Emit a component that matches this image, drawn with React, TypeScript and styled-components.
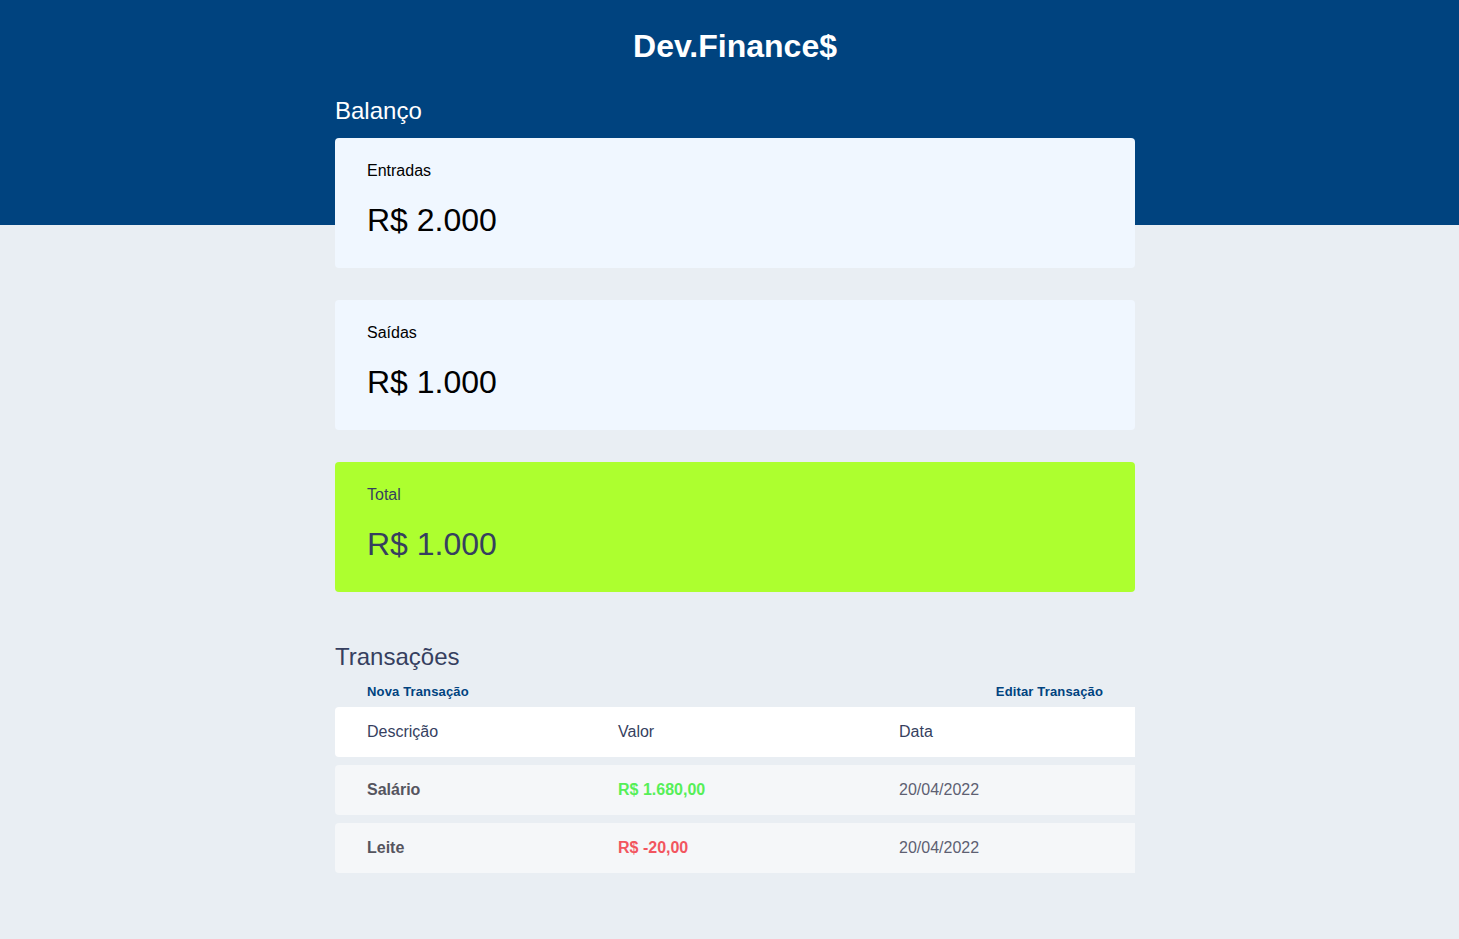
import React from "react";
import styled, { createGlobalStyle } from "styled-components";

const GlobalStyle = createGlobalStyle`
  * { box-sizing: border-box; margin: 0; padding: 0; }
  body {
    background: #e9eef3;
    font-family: "Liberation Sans", Arial, sans-serif;
    min-height: 100vh;
  }
`;

const Header = styled.header`
  background: #00437f;
  height: 225px;
  padding: 28px 0 0 11px;
  text-align: center;
`;

const Logo = styled.h1`
  color: #ffffff;
  font-size: 32px;
  line-height: 37px;
  font-weight: 700;
`;

const Page = styled.div`
  padding-left: 11px;
`;

const Main = styled.main`
  width: 800px;
  margin: -128px auto 0;
  display: flex;
  flex-direction: column;
`;

const SectionTitle = styled.h2<{ $light?: boolean }>`
  font-size: 24px;
  line-height: 28px;
  font-weight: 400;
  color: ${(p) => (p.$light ? "#ffffff" : "#363f5f")};
`;

const Balance = styled.section`
  display: flex;
  flex-direction: column;
  gap: 13px;
`;

const Cards = styled.div`
  display: flex;
  flex-direction: column;
  gap: 32px;
`;

const Card = styled.div<{ $total?: boolean }>`
  background: ${(p) => (p.$total ? "#adff2f" : "#f0f7ff")};
  color: ${(p) => (p.$total ? "#363f5f" : "#000000")};
  border-radius: 4px;
  padding: 24px 32px;
`;

const CardLabel = styled.h3`
  font-size: 16px;
  line-height: 18px;
  font-weight: 400;
`;

const CardValue = styled.p`
  font-size: 32px;
  line-height: 48px;
  margin-top: 16px;
`;

const Transactions = styled.section`
  margin-top: 51px;
  display: flex;
  flex-direction: column;
`;

const Actions = styled.div`
  display: flex;
  justify-content: space-between;
  padding: 0 32px;
  margin-top: 13px;
`;

const ActionLink = styled.a`
  color: #00437f;
  font-size: 13px;
  line-height: 15px;
  font-weight: 700;
  text-decoration: none;
  letter-spacing: 0.15px;
  cursor: pointer;
`;

const Table = styled.div`
  display: flex;
  flex-direction: column;
  gap: 8px;
  margin-top: 8px;
`;

const Row = styled.div<{ $head?: boolean }>`
  display: grid;
  grid-template-columns: 251px 281px 268px;
  height: 50px;
  align-items: center;
  background: ${(p) => (p.$head ? "#ffffff" : "#f5f7f9")};
  border-radius: 4px 0 0 4px;
`;

const Cell = styled.div<{ $kind?: "head" | "desc" | "income" | "expense" | "date" }>`
  padding-left: 32px;
  font-size: 16px;
  line-height: 18px;
  font-weight: ${(p) =>
    p.$kind === "desc" || p.$kind === "income" || p.$kind === "expense" ? 700 : 400};
  color: ${(p) =>
    p.$kind === "desc"
      ? "#55555f"
      : p.$kind === "income"
      ? "#56ef58"
      : p.$kind === "expense"
      ? "#f2555f"
      : p.$kind === "date"
      ? "#5d5f72"
      : "#363f5f"};
`;

const transactions = [
  { desc: "Salário", amount: "R$ 1.680,00", income: true, date: "20/04/2022" },
  { desc: "Leite", amount: "R$ -20,00", income: false, date: "20/04/2022" },
];

export default function App() {
  return (
    <>
      <GlobalStyle />
      <Header>
        <Logo>Dev.Finance$</Logo>
      </Header>
      <Page>
        <Main>
          <Balance>
            <SectionTitle $light>Balanço</SectionTitle>
            <Cards>
              <Card>
                <CardLabel>Entradas</CardLabel>
                <CardValue>R$ 2.000</CardValue>
              </Card>
              <Card>
                <CardLabel>Saídas</CardLabel>
                <CardValue>R$ 1.000</CardValue>
              </Card>
              <Card $total>
                <CardLabel>Total</CardLabel>
                <CardValue>R$ 1.000</CardValue>
              </Card>
            </Cards>
          </Balance>
          <Transactions>
            <SectionTitle>Transações</SectionTitle>
            <Actions>
              <ActionLink>Nova Transação</ActionLink>
              <ActionLink>Editar Transação</ActionLink>
            </Actions>
            <Table>
              <Row $head>
                <Cell>Descrição</Cell>
                <Cell>Valor</Cell>
                <Cell>Data</Cell>
              </Row>
              {transactions.map((t) => (
                <Row key={t.desc}>
                  <Cell $kind="desc">{t.desc}</Cell>
                  <Cell $kind={t.income ? "income" : "expense"}>{t.amount}</Cell>
                  <Cell $kind="date">{t.date}</Cell>
                </Row>
              ))}
            </Table>
          </Transactions>
        </Main>
      </Page>
    </>
  );
}
